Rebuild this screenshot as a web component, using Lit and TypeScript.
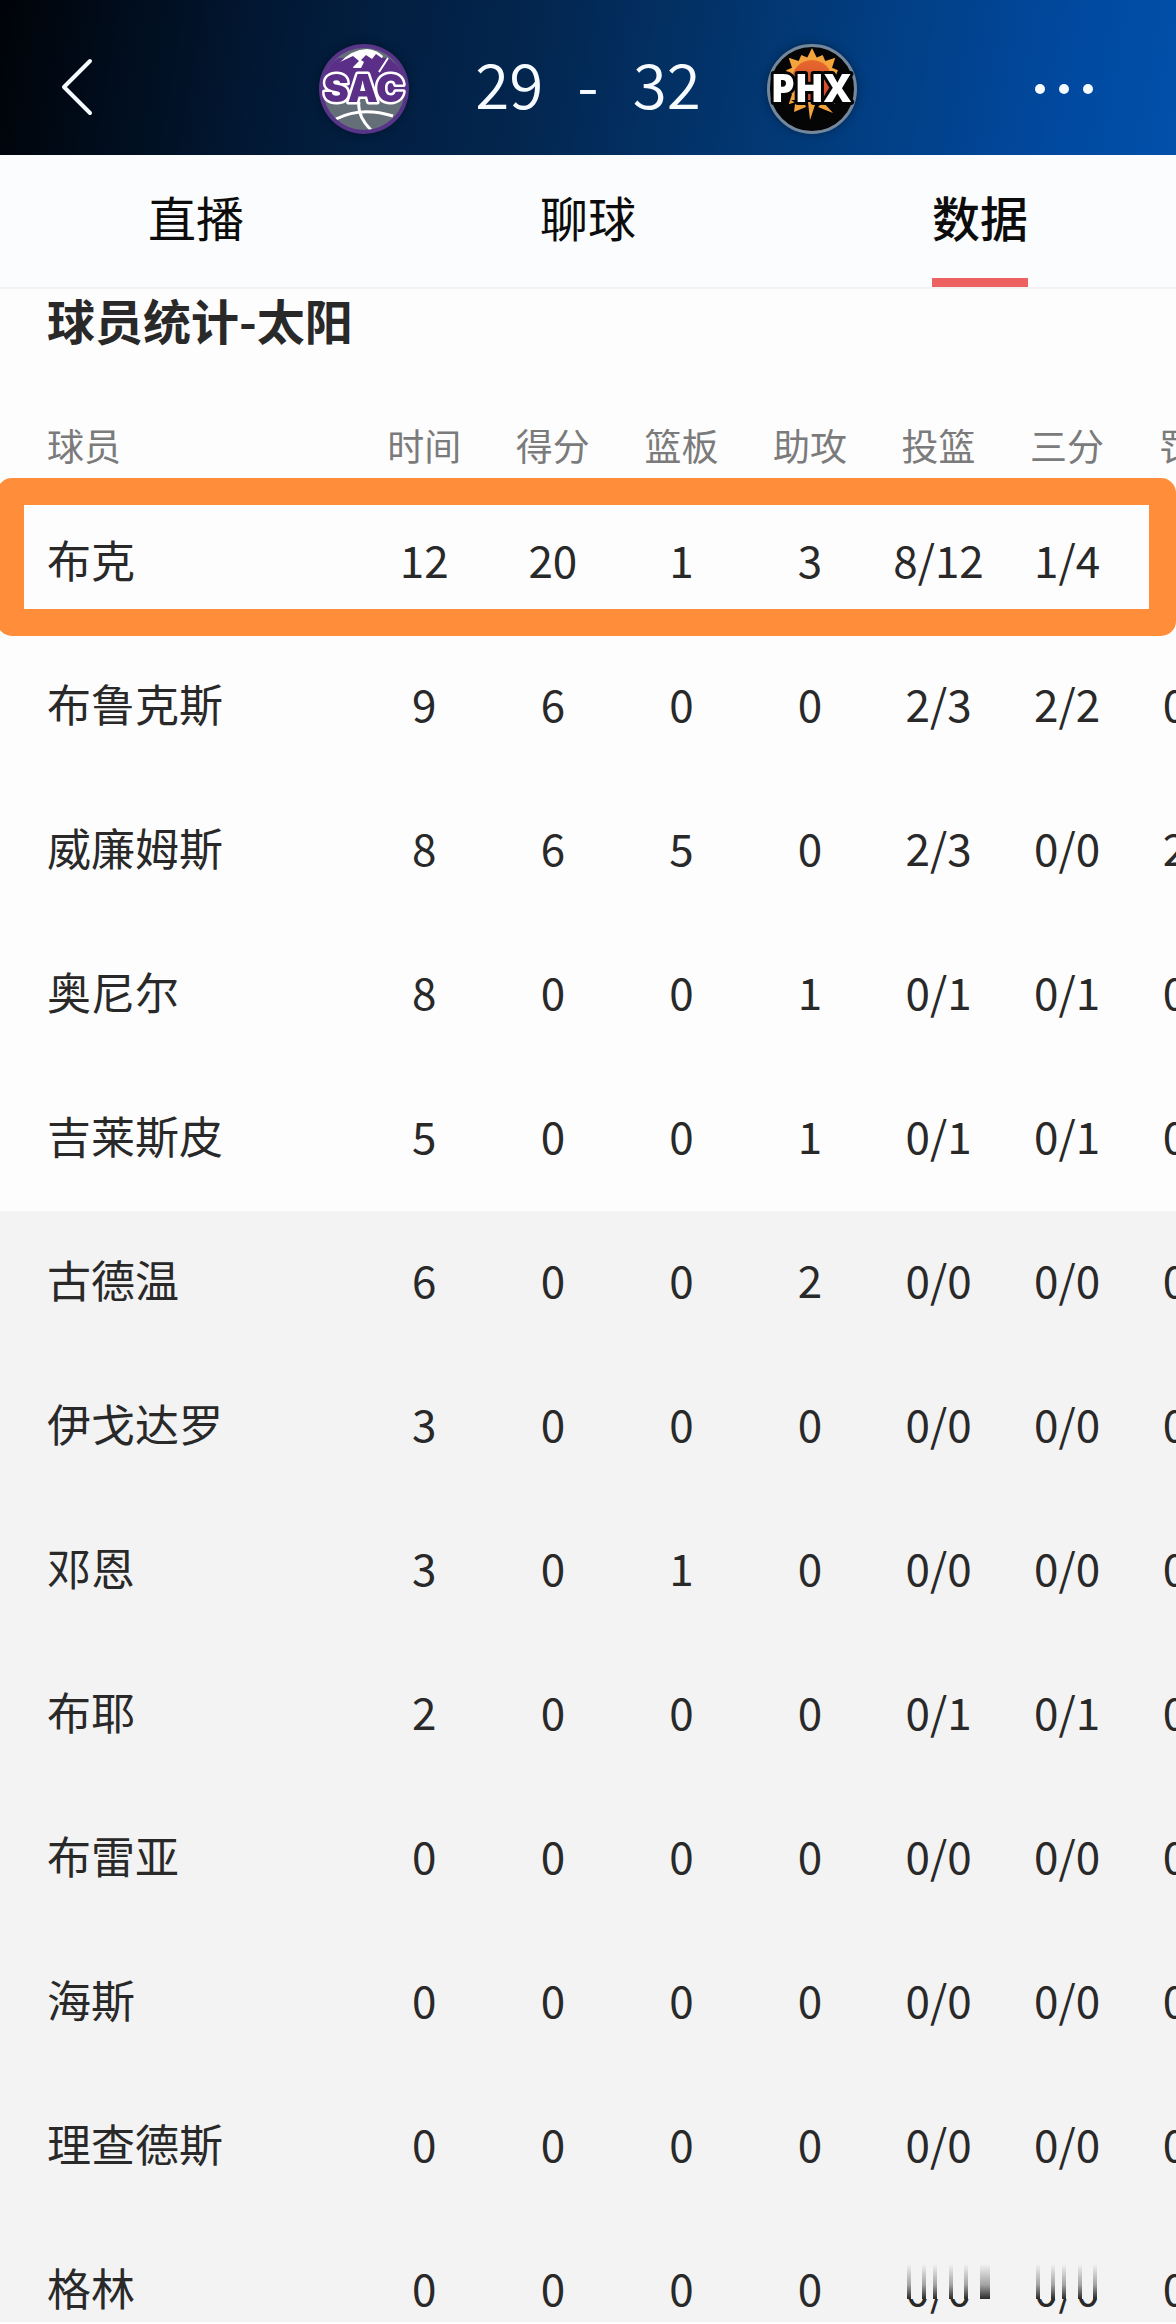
import { LitElement, html, svg, css } from "lit";
import { customElement, state } from "lit/decorators.js";

type Row = [string, ...string[]];

const COLUMNS = ["时间", "得分", "篮板", "助攻", "投篮", "三分", "罚球"];

const PLAYERS: Row[] = [
  ["布克", "12", "20", "1", "3", "8/12", "1/4", ""],
  ["布鲁克斯", "9", "6", "0", "0", "2/3", "2/2", "0/0"],
  ["威廉姆斯", "8", "6", "5", "0", "2/3", "0/0", "2/2"],
  ["奥尼尔", "8", "0", "0", "1", "0/1", "0/1", "0/0"],
  ["吉莱斯皮", "5", "0", "0", "1", "0/1", "0/1", "0/0"],
  ["古德温", "6", "0", "0", "2", "0/0", "0/0", "0/0"],
  ["伊戈达罗", "3", "0", "0", "0", "0/0", "0/0", "0/0"],
  ["邓恩", "3", "0", "1", "0", "0/0", "0/0", "0/0"],
  ["布耶", "2", "0", "0", "0", "0/1", "0/1", "0/0"],
  ["布雷亚", "0", "0", "0", "0", "0/0", "0/0", "0/0"],
  ["海斯", "0", "0", "0", "0", "0/0", "0/0", "0/0"],
  ["理查德斯", "0", "0", "0", "0", "0/0", "0/0", "0/0"],
  ["格林", "0", "0", "0", "0", "0/0", "0/0", "0/0"],
];

const STARTERS = 5;

@customElement("score-bar")
class ScoreBar extends LitElement {
  static styles = css`
    :host {
      display: block;
      flex: none;
      background: linear-gradient(100deg, #000308 0%, #021a38 25%, #03264f 45%, #023a78 68%, #0149a0 90%, #0150aa 100%);
      color: #f6fbff;
    }
    .bar {
      display: grid;
      grid-template-columns: 1fr auto 1fr;
      align-items: center;
      height: 155px;
      padding: 22px 60px 0;
      box-sizing: border-box;
    }
    .icon {
      display: flex;
      padding: 0;
      border: 0;
      background: none;
      color: inherit;
    }
    .back {
      padding-bottom: 4px;
    }
    .more {
      justify-self: end;
    }
    .match {
      display: flex;
      align-items: center;
      justify-content: space-between;
      gap: 66px;
    }
    .score {
      display: flex;
      align-items: center;
      gap: 34px;
      margin: 0;
      padding-bottom: 14px;
      font-size: 62px;
      line-height: 76px;
      font-weight: 350;
    }
    .logo {
      display: block;
      overflow: visible;
      filter: drop-shadow(0 0 5px rgba(0, 0, 0, 0.35));
    }
    .mark {
      font-family: "Open Sans", "Liberation Sans", sans-serif;
      font-weight: 800;
      paint-order: stroke;
      stroke-linejoin: round;
      text-anchor: middle;
    }
    .sac {
      font-family: Inter, "Liberation Sans", sans-serif;
      font-weight: 900;
      font-size: 38px;
      fill: #5b2f87;
      stroke: #fff;
      stroke-width: 5px;
    }
    .phx {
      font-size: 38px;
      fill: #fff;
      stroke: #050505;
      stroke-width: 6px;
    }
  `;

  private sun() {
    const pts: string[] = [];
    for (let i = 0; i < 32; i++) {
      const a = (i / 32) * Math.PI * 2 - Math.PI / 2;
      const r = i % 2 ? 24 : i % 4 ? 28 : 33;
      pts.push(`${(45 + Math.cos(a) * r).toFixed(1)},${(37 + Math.sin(a) * r).toFixed(1)}`);
    }
    return svg`<polygon points=${pts.join(" ")} fill="#f3a43c" />`;
  }

  render() {
    return html`
      <header class="bar">
        <button class="icon back" aria-label="返回">
          <svg width="34" height="58" viewBox="0 0 34 58" fill="none" stroke="currentColor" stroke-width="4" stroke-linecap="round" stroke-linejoin="round">
            <path d="M30 3 L4 29 L30 55" />
          </svg>
        </button>
        <div class="match">
          <svg class="logo" width="90" height="90" viewBox="0 0 90 90" role="img" aria-label="SAC">
            <defs><clipPath id="ball"><circle cx="45" cy="45" r="41" /></clipPath></defs>
            <circle cx="45" cy="45" r="45" fill="#59358a" />
            <g clip-path="url(#ball)">
              <rect width="90" height="90" fill="#646f78" />
              <path d="M4 24 L20 14 H70 L88 30 V52 H0 Z" fill="#5b2f87" />
              <path d="M19 20 Q33 5 48 5 Q58 6 64 12 L58 24 H22 Z" fill="#fff" />
              <path d="M12 22 L34 12 L40 17 L34 23 L38 32 H12 Z" fill="#5b2f87" />
              <path d="M47 11 L53 15 L57 10 L67 17 L82 36 H36 L38 26 L42 24 L45 18 L42 16 Z" fill="#5b2f87" />
              <path d="M69 14 L60 28" stroke="#fff" stroke-width="2" />
              <path d="M17 75 Q42 62 74 72 M40 58 Q38 72 52 86" fill="none" stroke="#fff" stroke-width="3" />
            </g>
            <text class="mark sac" x="45" y="58">SAC</text>
          </svg>
          <p class="score"><span>29</span><span>-</span><span>32</span></p>
          <svg class="logo" width="90" height="90" viewBox="0 0 90 90" role="img" aria-label="PHX">
            <defs>
              <linearGradient id="core" x1="0" y1="0" x2="0" y2="1">
                <stop offset="0" stop-color="#e8682c" />
                <stop offset="1" stop-color="#c9452f" />
              </linearGradient>
            </defs>
            <circle cx="45" cy="45" r="43.5" fill="#050505" stroke="#74879b" stroke-width="3" />
            ${this.sun()}
            <circle cx="45" cy="36" r="20" fill="url(#core)" />
            <path d="M24 56 H66 L60 60 L66 69 L53 72 H38 L27 69 L30 60 Z" fill="#050505" />
            <path d="M28 60 L37 58 L39 63 L27 68 Z M41 58 H49 L43 76 Z M51 63 L56 58 L66 69 Z" fill="#f3a43c" />
            <text class="mark phx" x="44" y="58">PHX</text>
          </svg>
        </div>
        <button class="icon more" aria-label="更多">
          <svg width="84" height="12" viewBox="0 0 84 12" fill="currentColor">
            <circle cx="8" cy="6" r="5" /><circle cx="32" cy="6" r="5" /><circle cx="56" cy="6" r="5" />
          </svg>
        </button>
      </header>
    `;
  }
}

@customElement("tab-strip")
class TabStrip extends LitElement {
  @state() private current = 2;

  static styles = css`
    :host {
      display: block;
      flex: none;
      background: #fbfcfd;
      border-bottom: 2px solid #f1f3f3;
    }
    .tabs {
      display: grid;
      grid-template-columns: repeat(3, 1fr);
    }
    .tab {
      display: flex;
      justify-content: center;
      padding: 0;
      border: 0;
      background: none;
      font: inherit;
      font-size: 48px;
      line-height: 123px;
      color: #0c0c0c;
    }
    .label {
      border-bottom: 9px solid transparent;
    }
    .active {
      font-weight: 500;
    }
    .active .label {
      border-color: #ed6161;
    }
  `;

  render() {
    return html`<nav class="tabs">
      ${["直播", "聊球", "数据"].map(
        (t, i) => html`<button class="tab ${i === this.current ? "active" : ""}" @click=${() => (this.current = i)}>
          <span class="label">${t}</span>
        </button>`
      )}
    </nav>`;
  }
}

@customElement("player-stats")
class PlayerStats extends LitElement {
  static styles = css`
    :host {
      display: flex;
      flex-direction: column;
      flex: 1;
      min-height: 0;
      color: #292929;
    }
    .title {
      flex: none;
      margin: 0;
      padding: 0 47px 54px;
      font-size: 48px;
      line-height: 60px;
      font-weight: 700;
    }
    .sheet {
      position: relative;
      flex: 1;
      min-height: 0;
      overflow: hidden;
    }
    .table {
      width: 1260px;
      min-width: 100%;
      table-layout: fixed;
      border-collapse: collapse;
    }
    .name {
      width: 313px;
      padding-left: 47px;
      padding-right: 0;
      text-align: left;
    }
    .head {
      height: 84px;
      padding-top: 0;
      padding-bottom: 4px;
      font-size: 37px;
      line-height: 84px;
      font-weight: 400;
      color: #7b7b7b;
    }
    .cell {
      height: 136px;
      padding-top: 0;
      padding-bottom: 8px;
      font-size: 44px;
      line-height: 136px;
      font-weight: 400;
    }
    .num {
      position: relative;
      padding-left: 0;
      padding-right: 0;
      text-align: center;
      white-space: nowrap;
    }
    .bench {
      background: #f3f3f3;
    }
    .ring {
      position: absolute;
      top: 75px;
      left: -3px;
      right: 0;
      height: 158px;
      box-sizing: border-box;
      border: 27px solid #ff8d3a;
      border-radius: 15px;
      pointer-events: none;
    }
    .fade {
      position: absolute;
      top: 45px;
      left: 14px;
    }
  `;

  /* Soft vertical streaks that run down into the lower edge of a value. */
  private fade(withBlock: boolean) {
    const bars = [19, 34, 45, 61, 76];
    return html`<svg class="fade" width="110" height="35" viewBox="0 0 110 35" aria-hidden="true">
      <defs>
        <linearGradient id="streak" x1="0" y1="0" x2="0" y2="1">
          <stop offset="0" stop-color="#292929" stop-opacity="0" />
          <stop offset="0.6" stop-color="#292929" stop-opacity="0.4" />
          <stop offset="1" stop-color="#292929" stop-opacity="1" />
        </linearGradient>
      </defs>
      <rect width="110" height="35" fill="#f3f3f3" />
      ${bars.map((x) => svg`<rect x=${x} width="4" height="35" fill="url(#streak)" />`)}
      ${withBlock ? svg`<rect x="92" width="10" height="35" fill="url(#streak)" />` : ""}
    </svg>`;
  }

  render() {
    const last = PLAYERS.length - 1;
    return html`
      <h2 class="title">球员统计-太阳</h2>
      <div class="sheet">
        <table class="table">
          <thead>
            <tr>
              <th class="name head" scope="col">球员</th>
              ${COLUMNS.map((c) => html`<th class="num head" scope="col">${c}</th>`)}
            </tr>
          </thead>
          <tbody>
            ${PLAYERS.map(
              ([name, ...values], r) => html`<tr class=${r < STARTERS ? "starter" : "bench"}>
                <th class="name cell" scope="row">${name}</th>
                ${values.map(
                  (v, c) => html`<td class="num cell">${v}${r === last && (c === 4 || c === 5) ? this.fade(c === 4) : ""}</td>`
                )}
              </tr>`
            )}
          </tbody>
        </table>
        <div class="ring"></div>
      </div>
    `;
  }
}

@customElement("app-root")
class AppRoot extends LitElement {
  static styles = css`
    :host {
      display: flex;
      flex-direction: column;
      height: 100vh;
      box-sizing: border-box;
      padding-bottom: 2px;
      overflow: hidden;
      background: #fdfdfd;
      font-family: "Noto Sans CJK SC", "Noto Sans", sans-serif;
    }
  `;

  render() {
    return html`
      <score-bar></score-bar>
      <tab-strip></tab-strip>
      <player-stats></player-stats>
    `;
  }
}
